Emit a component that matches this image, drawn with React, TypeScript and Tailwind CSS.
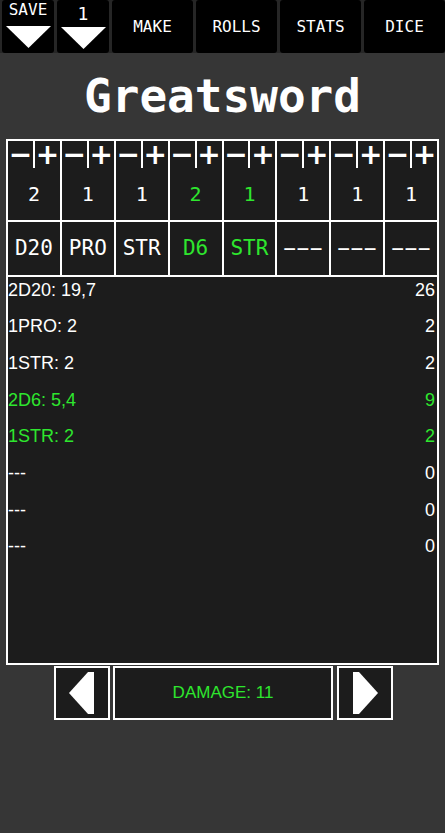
import React from 'react';

const GREEN = 'text-[#2ee62e]';

const columns = [
  { count: 2, label: 'D20', on: false },
  { count: 1, label: 'PRO', on: false },
  { count: 1, label: 'STR', on: false },
  { count: 2, label: 'D6', on: true },
  { count: 1, label: 'STR', on: true },
  { count: 1, label: '---', on: false },
  { count: 1, label: '---', on: false },
  { count: 1, label: '---', on: false },
];

const rolls = [
  { text: '2D20: 19,7', total: 26, on: false },
  { text: '1PRO: 2', total: 2, on: false },
  { text: '1STR: 2', total: 2, on: false },
  { text: '2D6: 5,4', total: 9, on: true },
  { text: '1STR: 2', total: 2, on: true },
  { text: '---', total: 0, on: false },
  { text: '---', total: 0, on: false },
  { text: '---', total: 0, on: false },
];

const pixel = "font-['DejaVu_Sans_Mono',monospace]";
const sans = "font-['Liberation_Sans',Arial,sans-serif]";

const DownTri = () => (
  <svg width="45" height="22" viewBox="0 0 45 22" className="block">
    <polygon points="0,0 45,0 22.5,22" fill="#fff" />
  </svg>
);

const TopButton = ({ children }: { children: React.ReactNode }) => (
  <div className={`flex-1 h-full bg-black rounded-[3px] flex items-center justify-center text-white text-[16px] ${pixel}`}>
    {children}
  </div>
);

export default function App() {
  return (
    <div className="w-[445px] h-[833px] bg-[#363636] flex flex-col">
      {/* top bar */}
      <div className="h-[53px] flex gap-[3px] pl-[2px] bg-[#262626]">
        <div className={`w-[52px] h-full bg-black rounded-[3px] flex flex-col items-center text-white ${pixel}`}>
          <span className="text-[16px] leading-none mt-[2px]">SAVE</span>
          <div className="mt-[8px]"><DownTri /></div>
        </div>
        <div className={`w-[52px] h-full bg-black rounded-[3px] flex flex-col items-center text-white ${pixel}`}>
          <span className="text-[18px] leading-none mt-[5px]">1</span>
          <div className="mt-[4px]"><DownTri /></div>
        </div>
        <TopButton>MAKE</TopButton>
        <TopButton>ROLLS</TopButton>
        <TopButton>STATS</TopButton>
        <TopButton>DICE</TopButton>
      </div>

      {/* title */}
      <div className="h-[86px] flex items-center justify-center">
        <h1 className={`text-white text-[46px] font-bold leading-none ${pixel}`}>Greatsword</h1>
      </div>

      {/* table */}
      <div className="ml-[6px] w-[433px] bg-white p-[2px] flex flex-col gap-[2px]">
        <div className="grid grid-cols-16 gap-[2px] h-[25px]">
          {columns.map((_, i) => (
            <React.Fragment key={i}>
              <div className="bg-[#1c1c1c] flex items-center justify-center text-white text-[28px] font-bold leading-none font-['DejaVu_Sans',sans-serif]">−</div>
              <div className="bg-[#1c1c1c] flex items-center justify-center text-white text-[28px] font-bold leading-none font-['DejaVu_Sans',sans-serif]">+</div>
            </React.Fragment>
          ))}
        </div>
        <div className="grid grid-cols-8 gap-[2px] h-[52px]">
          {columns.map((c, i) => (
            <div key={i} className={`bg-[#1c1c1c] flex items-center justify-center text-[20px] ${pixel} ${c.on ? GREEN : 'text-white'}`}>
              {c.count}
            </div>
          ))}
        </div>
        <div className="grid grid-cols-8 gap-[2px] h-[53px]">
          {columns.map((c, i) => (
            <div key={i} className={`bg-[#1c1c1c] flex items-center justify-center text-[21px] ${pixel} ${c.on ? GREEN : 'text-white'}`}>
              {c.label === '---' ? (
                <span className="inline-block scale-x-[2] tracking-[-6px] pr-[6px]">---</span>
              ) : (
                c.label
              )}
            </div>
          ))}
        </div>
        <div className={`h-[386px] bg-[#1c1c1c] pt-[3px] pr-[2px] flex flex-col gap-[16.7px] text-[18px] ${sans}`}>
          {rolls.map((r, i) => (
            <div key={i} className={`h-[20px] flex items-center justify-between ${r.on ? GREEN : 'text-white'}`}>
              <span>{r.text}</span>
              <span>{r.total}</span>
            </div>
          ))}
        </div>
      </div>

      {/* bottom controls */}
      <div className="mt-[1px] ml-[54px] flex gap-[3px] h-[54px]">
        <button className="w-[56px] h-full border-2 border-white bg-[#1c1c1c] flex items-center justify-center">
          <svg width="26" height="42" viewBox="0 0 26 42">
            <polygon points="0,21 19,0 25,0 25,42 19,42" fill="#fff" />
          </svg>
        </button>
        <button className={`w-[220px] h-full border-2 border-white bg-[#1c1c1c] flex items-center justify-center text-[17px] ${sans} ${GREEN}`}>
          DAMAGE: 11
        </button>
        <button className="ml-[1px] w-[56px] h-full border-2 border-white bg-[#1c1c1c] flex items-center justify-center">
          <svg width="26" height="42" viewBox="0 0 26 42">
            <polygon points="26,21 7,0 1,0 1,42 7,42" fill="#fff" />
          </svg>
        </button>
      </div>
    </div>
  );
}
